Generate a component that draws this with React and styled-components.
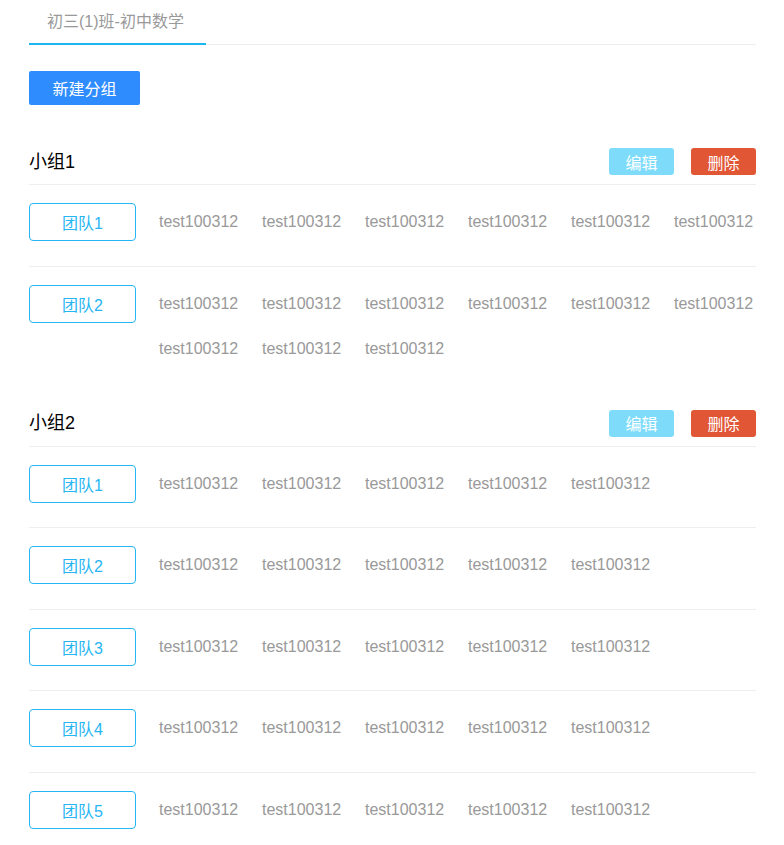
import React from "react";
import styled, { createGlobalStyle } from "styled-components";

const Global = createGlobalStyle`
  html, body { margin: 0; padding: 0; background: #fff; }
  body { font-family: "Liberation Sans", "Noto Sans CJK SC", sans-serif; }
  * { box-sizing: border-box; }
`;

const Page = styled.div`
  padding: 0 28px 0 29px;
`;

const Tabs = styled.div`
  display: flex;
  border-bottom: 1px solid #eeeeee;
`;

const Tab = styled.div`
  padding: 0 22px 0 18px;
  line-height: 43px;
  font-size: 16px;
  color: #999999;
  border-bottom: 2px solid #1fb5f1;
  margin-bottom: -1px;
`;

const PrimaryButton = styled.button`
  display: block;
  margin-top: 26px;
  width: 111px;
  height: 34px;
  border: none;
  border-radius: 2px;
  background: #2f8cff;
  color: #fff;
  font-family: inherit;
  font-size: 16px;
  padding: 0;
`;

const Group = styled.section`
  margin-top: ${(p) => (p.$first ? "25.5px" : "0")};
`;

const GroupHeader = styled.div`
  display: flex;
  align-items: center;
  padding: 17.5px 0 9px;
  border-bottom: 1px solid #eeeeee;
`;

const GroupTitle = styled.div`
  flex: 1;
  font-size: 18px;
  line-height: 24px;
  color: #000;
`;

const Actions = styled.div`
  display: flex;
  gap: 17px;
`;

const ActionButton = styled.button`
  width: 65px;
  height: 27px;
  border: none;
  border-radius: 3px;
  padding: 0;
  font-family: inherit;
  font-size: 16px;
  color: #fff;
  background: ${(p) => (p.$danger ? "#e15635" : "#7edcfa")};
`;

const TeamRow = styled.div`
  display: flex;
  align-items: flex-start;
  padding: 18px 0 24.5px;
  &:not(:last-child) {
    border-bottom: 1px solid #eeeeee;
  }
`;

const TeamButton = styled.button`
  flex: none;
  width: 107px;
  height: 38px;
  margin-right: 23px;
  border: 1px solid #27b6f4;
  border-radius: 4px;
  background: #fff;
  color: #27b6f4;
  font-family: inherit;
  font-size: 16px;
  padding: 0;
`;

const Members = styled.div`
  flex: 1;
  display: flex;
  flex-wrap: wrap;
  column-gap: 24px;
  row-gap: 7px;
`;

const Member = styled.span`
  width: 79px;
  white-space: nowrap;
  line-height: 38px;
  font-size: 16px;
  color: #999999;
`;

const groups = [
  {
    name: "小组1",
    teams: [
      { name: "团队1", count: 6 },
      { name: "团队2", count: 9 },
    ],
  },
  {
    name: "小组2",
    teams: [
      { name: "团队1", count: 5 },
      { name: "团队2", count: 5 },
      { name: "团队3", count: 5 },
      { name: "团队4", count: 5 },
      { name: "团队5", count: 5 },
    ],
  },
];

export default function App() {
  return (
    <Page>
      <Global />
      <Tabs>
        <Tab>初三(1)班-初中数学</Tab>
      </Tabs>
      <PrimaryButton>新建分组</PrimaryButton>
      {groups.map((g, gi) => (
        <Group key={gi} $first={gi === 0}>
          <GroupHeader>
            <GroupTitle>{g.name}</GroupTitle>
            <Actions>
              <ActionButton>编辑</ActionButton>
              <ActionButton $danger>删除</ActionButton>
            </Actions>
          </GroupHeader>
          {g.teams.map((t, ti) => (
            <TeamRow key={ti}>
              <TeamButton>{t.name}</TeamButton>
              <Members>
                {Array.from({ length: t.count }).map((_, mi) => (
                  <Member key={mi}>test100312</Member>
                ))}
              </Members>
            </TeamRow>
          ))}
        </Group>
      ))}
    </Page>
  );
}
